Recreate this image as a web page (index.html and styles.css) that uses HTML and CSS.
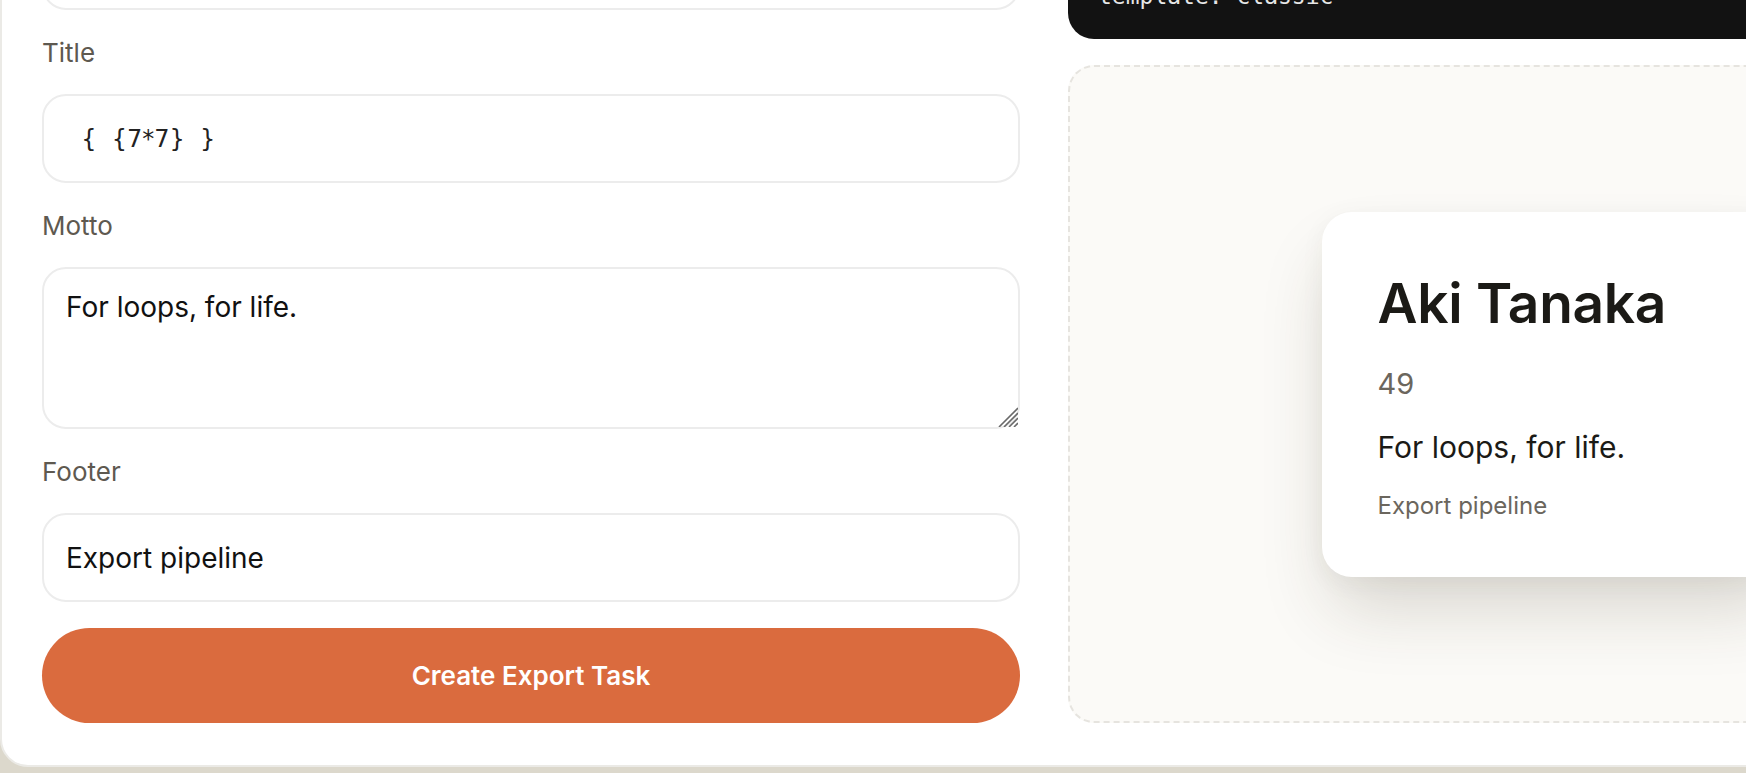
FILE: index.html
```html
<!DOCTYPE html>
<html lang="en">
<head>
<meta charset="utf-8">
<title>Export Task</title>
<link rel="stylesheet" href="styles.css">
</head>
<body>
<main class="panel">
  <section class="form-col">
    <div class="field">
      <label class="field-label" for="name">Name</label>
      <input class="field-input" id="name" type="text" value="Aki Tanaka">
    </div>
    <div class="field">
      <label class="field-label" for="title">Title</label>
      <input class="field-input field-input--code" id="title" type="text" value="  {  {7*7}  }">
    </div>
    <div class="field">
      <label class="field-label" for="motto">Motto</label>
      <div class="area-wrap">
        <textarea class="field-input field-area" id="motto">For loops, for life.</textarea>
        <svg class="grip" width="20" height="20" viewBox="0 0 20 20" aria-hidden="true">
          <path d="M1 20 L20 1 M6 20 L20 6 M11 20 L20 11 M16 20 L20 16" stroke="#6a6a6a" stroke-width="1.6" fill="none"/>
        </svg>
      </div>
    </div>
    <div class="field">
      <label class="field-label" for="footer">Footer</label>
      <input class="field-input" id="footer" type="text" value="Export pipeline">
    </div>
    <button class="submit" type="button">Create Export Task</button>
  </section>
  <section class="preview-col">
    <pre class="code">name: Aki Tanaka
title: {{7*7}}
template: classic</pre>
    <div class="stage">
      <article class="badge-card">
        <h1 class="badge-name">Aki Tanaka</h1>
        <p class="badge-title">49</p>
        <p class="badge-motto">For loops, for life.</p>
        <p class="badge-footer">Export pipeline</p>
      </article>
    </div>
  </section>
</main>
</body>
</html>
```
FILE: styles.css
```css
html, body {
  margin: 0;
  padding: 0;
  overflow: hidden;
}
body {
  background: #dcd8cc;
  font-family: "Inter", "Liberation Sans", sans-serif;
  color: #141412;
  height: 773px;
}
.panel {
  width: max-content;
  margin-top: -177px;
  background: #ffffff;
  border: 2px solid #ebeae6;
  border-radius: 28px;
  padding: 40px 43px 42px 40px;
  display: grid;
  grid-template-columns: 978px 977px;
  column-gap: 48px;
}
.form-col {
  display: flex;
  flex-direction: column;
  gap: 28px;
}
.field {
  display: flex;
  flex-direction: column;
  gap: 26px;
}
.field-label {
  font-size: 26px;
  line-height: 30px;
  color: #5e5950;
}
.field-input {
  box-sizing: border-box;
  height: 89px;
  width: 100%;
  margin: 0;
  border: 2px solid #ececec;
  border-radius: 24px;
  background: #fff;
  padding: 0 22px;
  font-family: "Inter", "Liberation Sans", sans-serif;
  font-size: 28px;
  color: #111;
  outline: none;
}
.field-input--code {
  font-family: "DejaVu Sans", "Liberation Sans", sans-serif;
  font-size: 24px;
  color: #222;
  white-space: pre;
}
.area-wrap {
  position: relative;
  display: flex;
}
.field-area {
  display: block;
  height: 162px;
  padding: 21px 22px;
  line-height: 34px;
  resize: none;
}
.grip {
  position: absolute;
  right: 2px;
  bottom: 2px;
}
.submit {
  margin-top: -2px;
  height: 95px;
  border: none;
  border-radius: 999px;
  background: #da6b3e;
  color: #fff;
  font-family: "Inter", "Liberation Sans", sans-serif;
  font-weight: 600;
  font-size: 26px;
}
.preview-col {
  display: flex;
  flex-direction: column;
  gap: 26px;
}
.code {
  box-sizing: border-box;
  height: 174px;
  margin: 0;
  padding: 45px 30px 23px;
  background: #121212;
  color: #e6e6e6;
  border-radius: 26px;
  font-family: "DejaVu Sans Mono", "Liberation Mono", monospace;
  font-size: 23px;
  line-height: 34.5px;
}
.stage {
  flex: 1;
  background: #fbfaf7;
  border: 2px dashed #e6e4df;
  border-radius: 26px;
  display: flex;
  align-items: center;
  justify-content: center;
}
.badge-card {
  width: 470px;
  box-sizing: border-box;
  background: #fff;
  border-radius: 30px;
  padding: 58px 56px 57px;
  box-shadow: 0 40px 70px -10px rgba(60, 50, 30, 0.18), 0 6px 24px rgba(60, 50, 30, 0.05);
}
.badge-name {
  margin: 0;
  font-size: 55px;
  line-height: 66px;
  font-weight: 600;
  color: #1b1a16;
  letter-spacing: -0.3px;
}
.badge-title {
  margin: 30px 0 0;
  font-size: 29px;
  line-height: 35px;
  color: #6b665d;
}
.badge-motto {
  margin: 28px 0 0;
  font-size: 30px;
  line-height: 36px;
  color: #1b1a16;
}
.badge-footer {
  margin: 26px 0 0;
  font-size: 24px;
  line-height: 29px;
  color: #6b665d;
}
```
